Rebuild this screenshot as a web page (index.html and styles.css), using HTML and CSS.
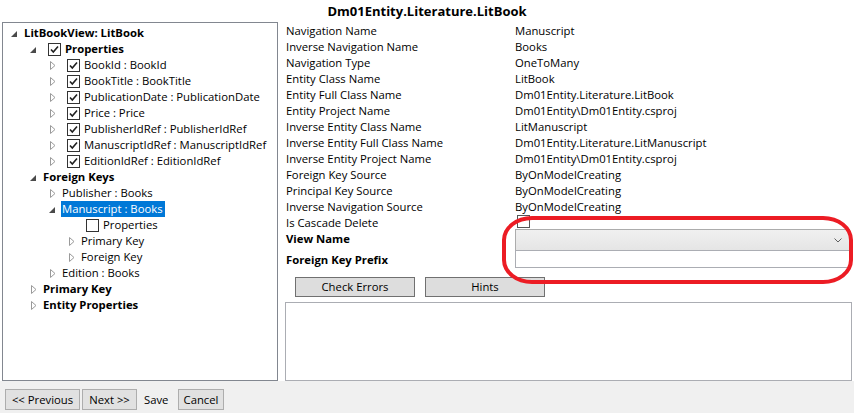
FILE: index.html
```html
<!DOCTYPE html>
<html>
<head>
<meta charset="utf-8">
<link rel="stylesheet" href="styles.css">
</head>
<body>
<div class="window">
  <div class="main">
    <div class="title">Dm01Entity.Literature.LitBook</div>
    <div class="content">
      <div class="tree">
        <div class="row l0"><span class="tg"><svg class="exp" width="6" height="6" viewBox="0 0 6 6"><path d="M6 0 L6 6 L0 6 Z" fill="#4a4a4a"/></svg></span><span class="hd b">LitBookView: LitBook</span></div>
        <div class="row l1"><span class="tg"><svg class="exp" width="6" height="6" viewBox="0 0 6 6"><path d="M6 0 L6 6 L0 6 Z" fill="#4a4a4a"/></svg></span><span class="hd b"><span class="cb"><svg width="11" height="11" viewBox="0 0 11 11"><path d="M2 5.5 L4.3 8 L9 2.5" fill="none" stroke="#202020" stroke-width="1.6"/></svg></span>Properties</span></div>
        <div class="row l2"><span class="tg"><svg class="col" width="6" height="9" viewBox="0 0 6 9"><path d="M0.5 0.5 L5 4.5 L0.5 8.5 Z" fill="none" stroke="#9a9a9a"/></svg></span><span class="hd"><span class="cb"><svg width="11" height="11" viewBox="0 0 11 11"><path d="M2 5.5 L4.3 8 L9 2.5" fill="none" stroke="#202020" stroke-width="1.6"/></svg></span>BookId : BookId</span></div>
        <div class="row l2"><span class="tg"><svg class="col" width="6" height="9" viewBox="0 0 6 9"><path d="M0.5 0.5 L5 4.5 L0.5 8.5 Z" fill="none" stroke="#9a9a9a"/></svg></span><span class="hd"><span class="cb"><svg width="11" height="11" viewBox="0 0 11 11"><path d="M2 5.5 L4.3 8 L9 2.5" fill="none" stroke="#202020" stroke-width="1.6"/></svg></span>BookTitle : BookTitle</span></div>
        <div class="row l2"><span class="tg"><svg class="col" width="6" height="9" viewBox="0 0 6 9"><path d="M0.5 0.5 L5 4.5 L0.5 8.5 Z" fill="none" stroke="#9a9a9a"/></svg></span><span class="hd"><span class="cb"><svg width="11" height="11" viewBox="0 0 11 11"><path d="M2 5.5 L4.3 8 L9 2.5" fill="none" stroke="#202020" stroke-width="1.6"/></svg></span>PublicationDate : PublicationDate</span></div>
        <div class="row l2"><span class="tg"><svg class="col" width="6" height="9" viewBox="0 0 6 9"><path d="M0.5 0.5 L5 4.5 L0.5 8.5 Z" fill="none" stroke="#9a9a9a"/></svg></span><span class="hd"><span class="cb"><svg width="11" height="11" viewBox="0 0 11 11"><path d="M2 5.5 L4.3 8 L9 2.5" fill="none" stroke="#202020" stroke-width="1.6"/></svg></span>Price : Price</span></div>
        <div class="row l2"><span class="tg"><svg class="col" width="6" height="9" viewBox="0 0 6 9"><path d="M0.5 0.5 L5 4.5 L0.5 8.5 Z" fill="none" stroke="#9a9a9a"/></svg></span><span class="hd"><span class="cb"><svg width="11" height="11" viewBox="0 0 11 11"><path d="M2 5.5 L4.3 8 L9 2.5" fill="none" stroke="#202020" stroke-width="1.6"/></svg></span>PublisherIdRef : PublisherIdRef</span></div>
        <div class="row l2"><span class="tg"><svg class="col" width="6" height="9" viewBox="0 0 6 9"><path d="M0.5 0.5 L5 4.5 L0.5 8.5 Z" fill="none" stroke="#9a9a9a"/></svg></span><span class="hd"><span class="cb"><svg width="11" height="11" viewBox="0 0 11 11"><path d="M2 5.5 L4.3 8 L9 2.5" fill="none" stroke="#202020" stroke-width="1.6"/></svg></span>ManuscriptIdRef : ManuscriptIdRef</span></div>
        <div class="row l2"><span class="tg"><svg class="col" width="6" height="9" viewBox="0 0 6 9"><path d="M0.5 0.5 L5 4.5 L0.5 8.5 Z" fill="none" stroke="#9a9a9a"/></svg></span><span class="hd"><span class="cb"><svg width="11" height="11" viewBox="0 0 11 11"><path d="M2 5.5 L4.3 8 L9 2.5" fill="none" stroke="#202020" stroke-width="1.6"/></svg></span>EditionIdRef : EditionIdRef</span></div>
        <div class="row l1"><span class="tg"><svg class="exp" width="6" height="6" viewBox="0 0 6 6"><path d="M6 0 L6 6 L0 6 Z" fill="#4a4a4a"/></svg></span><span class="hd b">Foreign Keys</span></div>
        <div class="row l2"><span class="tg"><svg class="col" width="6" height="9" viewBox="0 0 6 9"><path d="M0.5 0.5 L5 4.5 L0.5 8.5 Z" fill="none" stroke="#9a9a9a"/></svg></span><span class="hd">Publisher : Books</span></div>
        <div class="row l2"><span class="tg"><svg class="exp" width="6" height="6" viewBox="0 0 6 6"><path d="M6 0 L6 6 L0 6 Z" fill="#4a4a4a"/></svg></span><span class="hd sel">Manuscript : Books</span></div>
        <div class="row l3"><span class="tg"></span><span class="hd"><span class="cb"></span>Properties</span></div>
        <div class="row l3"><span class="tg"><svg class="col" width="6" height="9" viewBox="0 0 6 9"><path d="M0.5 0.5 L5 4.5 L0.5 8.5 Z" fill="none" stroke="#9a9a9a"/></svg></span><span class="hd">Primary Key</span></div>
        <div class="row l3"><span class="tg"><svg class="col" width="6" height="9" viewBox="0 0 6 9"><path d="M0.5 0.5 L5 4.5 L0.5 8.5 Z" fill="none" stroke="#9a9a9a"/></svg></span><span class="hd">Foreign Key</span></div>
        <div class="row l2"><span class="tg"><svg class="col" width="6" height="9" viewBox="0 0 6 9"><path d="M0.5 0.5 L5 4.5 L0.5 8.5 Z" fill="none" stroke="#9a9a9a"/></svg></span><span class="hd">Edition : Books</span></div>
        <div class="row l1"><span class="tg"><svg class="col" width="6" height="9" viewBox="0 0 6 9"><path d="M0.5 0.5 L5 4.5 L0.5 8.5 Z" fill="none" stroke="#9a9a9a"/></svg></span><span class="hd b">Primary Key</span></div>
        <div class="row l1"><span class="tg"><svg class="col" width="6" height="9" viewBox="0 0 6 9"><path d="M0.5 0.5 L5 4.5 L0.5 8.5 Z" fill="none" stroke="#9a9a9a"/></svg></span><span class="hd b">Entity Properties</span></div>
      </div>
      <div class="detail">
        <div class="grid">
          <div class="lbl">Navigation Name</div><div class="val">Manuscript</div>
          <div class="lbl">Inverse Navigation Name</div><div class="val">Books</div>
          <div class="lbl">Navigation Type</div><div class="val">OneToMany</div>
          <div class="lbl">Entity Class Name</div><div class="val">LitBook</div>
          <div class="lbl">Entity Full Class Name</div><div class="val">Dm01Entity.Literature.LitBook</div>
          <div class="lbl">Entity Project Name</div><div class="val">Dm01Entity\Dm01Entity.csproj</div>
          <div class="lbl">Inverse Entity Class Name</div><div class="val">LitManuscript</div>
          <div class="lbl">Inverse Entity Full Class Name</div><div class="val">Dm01Entity.Literature.LitManuscript</div>
          <div class="lbl">Inverse Entity Project Name</div><div class="val">Dm01Entity\Dm01Entity.csproj</div>
          <div class="lbl">Foreign Key Source</div><div class="val">ByOnModelCreating</div>
          <div class="lbl">Principal Key Source</div><div class="val">ByOnModelCreating</div>
          <div class="lbl">Inverse Navigation Source</div><div class="val">ByOnModelCreating</div>
          <div class="lbl">Is Cascade Delete</div><div class="val"><span class="cb2"></span></div>
        </div>
        <div class="editrow combo-row">
          <div class="lbl b">View Name</div>
          <div class="combo"><svg width="8" height="5" viewBox="0 0 8 5"><path d="M0.5 0.5 L4 4 L7.5 0.5" fill="none" stroke="#606060"/></svg></div>
        </div>
        <div class="editrow text-row">
          <div class="lbl b">Foreign Key Prefix</div>
          <div class="textbox"></div>
        </div>
        <div class="buttons">
          <div class="btn">Check Errors</div>
          <div class="btn">Hints</div>
        </div>
        <div class="output"></div>
      </div>
    </div>
    <div class="ellipse"></div>
  </div>
  <div class="footer">
    <div class="fbtn prev">&lt;&lt; Previous</div>
    <div class="fbtn next">Next &gt;&gt;</div>
    <div class="fbtn flat">Save</div>
    <div class="fbtn cancel">Cancel</div>
  </div>
</div>
</body>
</html>
```

FILE: styles.css
```css
* { box-sizing: border-box; }
html, body { margin: 0; padding: 0; }
body {
  width: 854px;
  height: 413px;
  overflow: hidden;
  background: #f0f0f0;
  font-family: "Open Sans", "Noto Sans", sans-serif;
  font-size: 11.3px;
  color: #000;
}
.window { width: 854px; height: 413px; display: flex; flex-direction: column; }
.main {
  position: relative;
  height: 381px;
  background: #fff;
  display: flex;
  flex-direction: column;
}
.title {
  height: 22px;
  padding-top: 3px;
  text-align: center;
  font-weight: bold;
  font-size: 13px;
  line-height: 17px;
}
.content { display: flex; flex: 1; }
.tree {
  margin-left: 2px;
  width: 276px;
  height: 359px;
  border: 1px solid #828790;
  padding-top: 2px;
}
.row {
  height: 16px;
  display: flex;
  align-items: center;
  white-space: nowrap;
}
.l0 { padding-left: 2px; }
.l1 { padding-left: 21px; }
.l2 { padding-left: 40px; }
.l3 { padding-left: 59px; }
.tg {
  width: 17px;
  height: 16px;
  display: flex;
  align-items: center;
  flex: none;
}
.tg .exp { margin-left: 6px; margin-top: 1px; }
.tg .col { margin-left: 7px; }
.hd {
  display: flex;
  align-items: center;
  height: 16px;
  padding: 0 2px;
  line-height: 16px;
}
.hd.b { font-weight: bold; }
.hd.sel { background: #0078d7; color: #fff; padding: 0 2px 0 1px; margin-left: 1px; }
.cb {
  width: 13px;
  height: 13px;
  border: 1px solid #333;
  background: #fff;
  margin-left: 5px;
  margin-right: 4px;
  display: flex;
  align-items: center;
  justify-content: center;
  flex: none;
}
.detail {
  margin-left: 7px;
  width: 567px;
  display: flex;
  flex-direction: column;
  padding-top: 1px;
}
.grid {
  display: grid;
  grid-template-columns: 230px 1fr;
  grid-auto-rows: 16px;
  line-height: 16px;
}
.lbl { padding-left: 1px; white-space: nowrap; }
.val { white-space: nowrap; }
.b { font-weight: bold; }
.cb2 {
  display: inline-block;
  width: 13px;
  height: 13px;
  border: 1px solid #555;
  margin-left: 2px;
  vertical-align: top;
}
.editrow {
  display: grid;
  grid-template-columns: 230px 335px;
  align-items: center;
}
.combo-row { height: 22px; margin-top: -2px; }
.combo-row .lbl { margin-top: -3px; }
.text-row { height: 18px; margin-top: -1px; }
.combo {
  height: 22px;
  border: 1px solid #acacac;
  background: linear-gradient(#f0f0f0, #e5e5e5);
  display: flex;
  align-items: center;
  justify-content: flex-end;
  padding-right: 7px;
}
.textbox {
  height: 18px;
  border: 1px solid #abadb3;
  background: #fff;
}
.buttons {
  display: flex;
  gap: 10px;
  margin-top: 9px;
  padding-left: 10px;
}
.btn {
  width: 120px;
  height: 20px;
  border: 1px solid #707070;
  background: #dddddd;
  text-align: center;
  line-height: 18px;
}
.output {
  margin-top: 5px;
  height: 79px;
  border: 1px solid #abadb3;
  background: #fff;
}
.ellipse {
  position: absolute;
  left: 502px;
  top: 216px;
  width: 351px;
  height: 68px;
  border: 4px solid #ec1c24;
  border-radius: 30px / 24px;
  pointer-events: none;
}
.footer {
  display: flex;
  align-items: flex-start;
  padding-top: 8px;
  padding-left: 5px;
}
.fbtn {
  height: 21px;
  border: 1px solid #adadad;
  background: #e1e1e1;
  line-height: 19px;
  text-align: center;
}
.prev { width: 75px; }
.next { width: 55px; margin-left: 2px; }
.flat { border-color: transparent; background: transparent; width: 34px; margin-left: 2px; text-align: left; padding-left: 4px; }
.cancel { width: 46px; margin-left: 5px; }
```
